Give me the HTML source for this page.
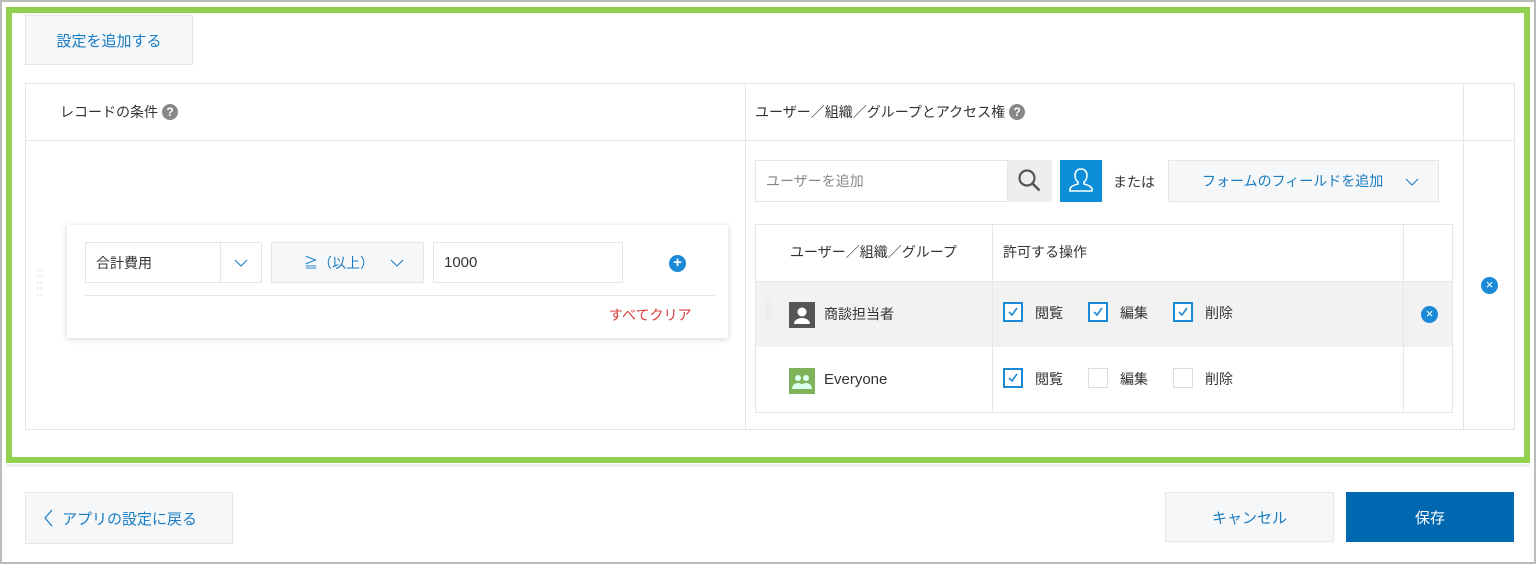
<!DOCTYPE html>
<html><head><meta charset="utf-8"><style>
*{box-sizing:border-box;margin:0;padding:0}
body{width:1536px;height:564px;position:relative;background:#fff;font-family:"Liberation Sans","Noto Sans CJK JP",sans-serif;color:#333;font-size:14px;overflow:hidden}
.a{position:absolute}
.blue{color:#1a7cc2}
.flex{display:flex;align-items:center}
.cb{position:absolute;width:20px;height:20px;border:2px solid #1a8ad6;background:#fff}
.cb.off{border:1px solid #ddd}
.cb svg{position:absolute;left:2px;top:2px}
.del{position:absolute;width:17px;height:17px;border-radius:50%;background:#1a8ad6;color:#fff;font-size:13px;line-height:16px;text-align:center;font-family:"Liberation Sans",sans-serif}
.q{display:inline-block;width:16px;height:16px;border-radius:50%;background:#888;color:#fff;font-size:12px;line-height:16px;text-align:center;font-weight:bold;margin-left:4px}
</style></head><body>
<div class="a" style="left:0;top:0;width:1536px;height:564px;border:2px solid #bbb"></div>
<div class="a" style="left:6px;top:7px;width:1524px;height:456px;border:6px solid #92d050"></div>
<div class="a" style="left:6px;top:464px;width:1524px;height:3px;background:#eee"></div>

<div class="a flex blue" style="left:25px;top:15px;width:168px;height:50px;background:#f5f7f9;border:1px solid #e3e7e8;justify-content:center;font-size:15px">設定を追加する</div>

<div class="a" style="left:25px;top:83px;width:1490px;height:347px;border:1px solid #e3e7e8"></div>
<div class="a" style="left:25px;top:140px;width:1490px;height:1px;background:#e3e7e8"></div>
<div class="a" style="left:745px;top:83px;width:1px;height:347px;background:#e3e7e8"></div>
<div class="a" style="left:1463px;top:83px;width:1px;height:347px;background:#e3e7e8"></div>

<div class="a flex" style="left:60px;top:102px;height:20px">レコードの条件<span class="q">?</span></div>
<div class="a flex" style="left:755px;top:102px;height:20px">ユーザー／組織／グループとアクセス権<span class="q">?</span></div>

<div class="a" style="left:36px;top:268px;color:#ccc;font-size:6px;line-height:6px">○○<br>○○<br>○○<br>○○<br>○○</div>
<div class="a" style="left:67px;top:225px;width:661px;height:113px;background:#fff;box-shadow:0 1px 6px rgba(0,0,0,.18)"></div>
<div class="a flex" style="left:85px;top:242px;width:177px;height:41px;border:1px solid #e3e7e8;padding-left:10px">合計費用</div>
<div class="a" style="left:220px;top:243px;width:1px;height:39px;background:#e3e7e8"></div>
<svg class="a" style="left:234px;top:259px" width="14" height="9"><path d="M1 1l6 6 6-6" fill="none" stroke="#1a7cc2" stroke-width="1"/></svg>
<div class="a flex blue" style="left:271px;top:242px;width:153px;height:41px;background:#f5f7f9;border:1px solid #e3e7e8;padding-left:32px">≧（以上）</div>
<svg class="a" style="left:390px;top:259px" width="14" height="9"><path d="M1 1l6 6 6-6" fill="none" stroke="#1a7cc2" stroke-width="1"/></svg>
<div class="a flex" style="left:433px;top:242px;width:190px;height:41px;border:1px solid #e3e7e8;padding-left:10px;font-size:15px">1000</div>
<div class="del" style="left:669px;top:255px;font-size:15px;font-weight:bold">+</div>
<div class="a" style="left:85px;top:295px;width:630px;height:1px;background:#e3e7e8"></div>
<div class="a" style="left:609px;top:305px;color:#d83c3c">すべてクリア</div>

<div class="a flex" style="left:755px;top:160px;width:253px;height:42px;border:1px solid #e3e7e8;padding-left:10px;color:#888">ユーザーを追加</div>
<div class="a" style="left:1008px;top:160px;width:44px;height:42px;background:#eee"></div>
<svg class="a" style="left:1017px;top:168px" width="26" height="26"><circle cx="10" cy="10" r="7.5" fill="none" stroke="#555" stroke-width="2.2"/><path d="M15.5 15.5l7 7" stroke="#555" stroke-width="2.6"/></svg>
<div class="a" style="left:1060px;top:160px;width:42px;height:42px;background:#0c8ed8"></div>
<svg class="a" style="left:1060px;top:160px" width="42" height="42"><path d="M21 9c-4 0-6 3-6 6.5 0 3 1.5 5.5 3 6.5v2c-4 1-8 2.5-8 5.5v1.5h22V29.5c0-3-4-4.5-8-5.5v-2c1.5-1 3-3.5 3-6.5C27 12 25 9 21 9z" fill="none" stroke="#fff" stroke-width="1.6"/></svg>
<div class="a" style="left:1113px;top:172px">または</div>
<div class="a flex blue" style="left:1168px;top:160px;width:271px;height:42px;background:#f5f7f9;border:1px solid #e3e7e8;padding-left:33px">フォームのフィールドを追加</div>
<svg class="a" style="left:1405px;top:178px" width="14" height="9"><path d="M1 1l6 6 6-6" fill="none" stroke="#1a7cc2" stroke-width="1"/></svg>

<div class="a" style="left:755px;top:224px;width:698px;height:189px;border:1px solid #e3e7e8"></div>
<div class="a" style="left:756px;top:281px;width:696px;height:66px;background:#f2f2f2;border-top:1px solid #e3e7e8"></div>
<div class="a" style="left:992px;top:224px;width:1px;height:189px;background:#e3e7e8"></div>
<div class="a" style="left:1403px;top:224px;width:1px;height:189px;background:#e3e7e8"></div>
<div class="a" style="left:790px;top:242px">ユーザー／組織／グループ</div>
<div class="a" style="left:1003px;top:242px">許可する操作</div>

<div class="a" style="left:765px;top:298px;color:#ccc;font-size:5px;line-height:5px">○○<br>○○<br>○○<br>○○<br>○○</div>
<div class="a" style="left:789px;top:302px;width:26px;height:26px;background:#555"></div>
<svg class="a" style="left:789px;top:302px" width="26" height="26"><circle cx="13" cy="10" r="4.5" fill="#fff"/><path d="M5 22c0-4 4-6 8-6s8 2 8 6z" fill="#fff"/></svg>
<div class="a" style="left:824px;top:304px">商談担当者</div>
<div class="a" style="left:789px;top:368px;width:26px;height:26px;background:#7fb35a"></div>
<svg class="a" style="left:789px;top:368px" width="26" height="26"><circle cx="9" cy="10" r="3" fill="#dfe"/><circle cx="17" cy="10" r="3" fill="#dfe"/><path d="M3 21c0-4 3-6 6-6s6 2 6 6zM11 21c0-4 3-6 6-6s6 2 6 6z" fill="#dfe"/></svg>
<div class="a" style="left:824px;top:371px;font-size:15px">Everyone</div>

<div class="cb" style="left:1003px;top:302px"><svg width="12" height="12"><path d="M2 6l3 3 5-7" fill="none" stroke="#1a8ad6" stroke-width="1.6"/></svg></div>
<div class="a" style="left:1035px;top:303px">閲覧</div>
<div class="cb" style="left:1088px;top:302px"><svg width="12" height="12"><path d="M2 6l3 3 5-7" fill="none" stroke="#1a8ad6" stroke-width="1.6"/></svg></div>
<div class="a" style="left:1120px;top:303px">編集</div>
<div class="cb" style="left:1173px;top:302px"><svg width="12" height="12"><path d="M2 6l3 3 5-7" fill="none" stroke="#1a8ad6" stroke-width="1.6"/></svg></div>
<div class="a" style="left:1205px;top:303px">削除</div>

<div class="cb" style="left:1003px;top:368px"><svg width="12" height="12"><path d="M2 6l3 3 5-7" fill="none" stroke="#1a8ad6" stroke-width="1.6"/></svg></div>
<div class="a" style="left:1035px;top:369px">閲覧</div>
<div class="cb off" style="left:1088px;top:368px"></div>
<div class="a" style="left:1120px;top:369px">編集</div>
<div class="cb off" style="left:1173px;top:368px"></div>
<div class="a" style="left:1205px;top:369px">削除</div>

<div class="del" style="left:1421px;top:306px">×</div>
<div class="del" style="left:1481px;top:277px">×</div>

<div class="a flex blue" style="left:25px;top:492px;width:208px;height:52px;background:#f5f7f9;border:1px solid #e3e7e8;padding-left:16px;font-size:15px"><svg width="12" height="20" style="margin-right:8px"><path d="M10 2L3 10l7 8" fill="none" stroke="#1a7cc2" stroke-width="1.2"/></svg>アプリの設定に戻る</div>
<div class="a flex blue" style="left:1165px;top:492px;width:169px;height:50px;background:#f5f7f9;border:1px solid #e3e7e8;justify-content:center;font-size:15px">キャンセル</div>
<div class="a flex" style="left:1346px;top:492px;width:168px;height:50px;background:#0068b0;color:#fff;justify-content:center;font-size:15px">保存</div>
</body></html>
